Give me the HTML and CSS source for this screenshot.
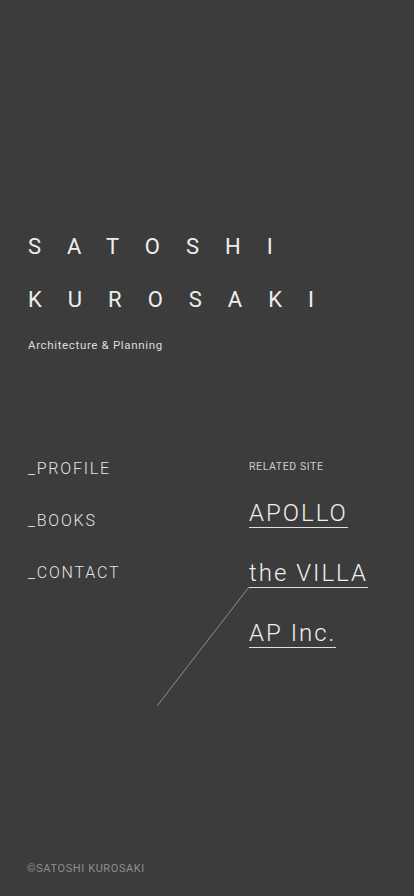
FILE: index.html
```html
<!DOCTYPE html>
<html>
<head>
    <title>SATOSHI KUROSAKI</title>
    <link rel="stylesheet" href="styles.css">
</head>
<body>
    <div class="page">
        <header class="site-title">
            <h1 class="name">
                <span class="name-line">SATOSHI</span>
                <span class="name-line">KUROSAKI</span>
            </h1>
            <p class="tagline">Architecture &amp; Planning</p>
        </header>

        <div class="menu-area">
            <nav class="main-nav">
                <a class="nav-link" href="#profile">_PROFILE</a>
                <a class="nav-link" href="#books">_BOOKS</a>
                <a class="nav-link" href="#contact">_CONTACT</a>
            </nav>

            <div class="related">
                <div class="related-label">RELATED SITE</div>
                <a class="related-link" href="#apollo">APOLLO</a>
                <a class="related-link" href="#villa">the VILLA</a>
                <a class="related-link" href="#ap">AP Inc.</a>
            </div>
        </div>

        <!-- thin pointer line from the VILLA -->
        <svg class="pointer-line" width="94" height="121" viewBox="0 0 94 121">
            <line x1="93" y1="1" x2="1" y2="120" stroke="#8c8c8c" stroke-width="1"/>
        </svg>

        <footer class="copyright">&copy;SATOSHI KUROSAKI</footer>
    </div>
</body>
</html>
```

FILE: styles.css
```css
body {
    margin: 0;
    background-color: #3c3c3c;
    font-family: Roboto, "Liberation Sans", sans-serif;
    color: #eeeeee;
}

a {
    color: inherit;
    text-decoration: none;
}

.page {
    position: relative;
    display: flex;
    flex-direction: column;
    min-height: 896px;
    padding: 0 0 0 28px;
    box-sizing: border-box;
}

.site-title {
    padding-top: 220px;
}

.name {
    margin: 0;
    font-size: 22px;
    font-weight: 400;
    letter-spacing: 26px;
    line-height: 53px;
}

.name-line {
    display: block;
}

.tagline {
    margin: 11px 0 0 0;
    font-size: 11.5px;
    line-height: 16px;
    letter-spacing: 0.65px;
    color: #dddddd;
}

.menu-area {
    display: flex;
    margin-top: 90px;
}

.main-nav {
    display: flex;
    flex-direction: column;
    width: 221px;
}

.nav-link {
    font-size: 16px;
    font-weight: 300;
    line-height: 52px;
    letter-spacing: 1.8px;
    color: #e4e4e4;
}

.related {
    display: flex;
    flex-direction: column;
    align-items: flex-start;
    padding-top: 17px;
}

.related-label {
    font-size: 10.5px;
    line-height: 14px;
    letter-spacing: 0.6px;
    color: #cccccc;
    margin-bottom: 26px;
}

.related-link {
    font-size: 24px;
    font-weight: 300;
    line-height: 27px;
    letter-spacing: 2px;
    border-bottom: 1px solid #e0e0e0;
    margin-bottom: 32px;
}

.pointer-line {
    position: absolute;
    left: 156px;
    top: 586px;
}

.copyright {
    margin-top: auto;
    padding-bottom: 20px;
    margin-left: -1px;
    font-size: 11px;
    line-height: 14px;
    letter-spacing: 0.6px;
    color: #8e8e8e;
}
```
